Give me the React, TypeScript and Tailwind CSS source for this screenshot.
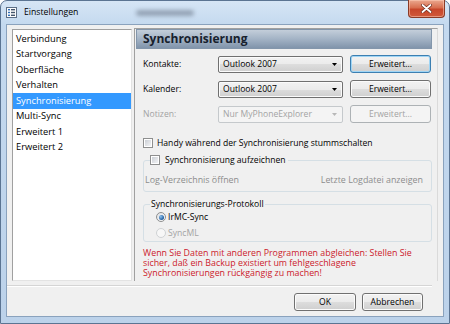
import React from "react";

const items = [
  "Verbindung",
  "Startvorgang",
  "Oberfläche",
  "Verhalten",
  "Synchronisierung",
  "Multi-Sync",
  "Erweitert 1",
  "Erweitert 2",
];

const btnBg =
  "bg-[linear-gradient(#f2f2f2,#ebebeb_50%,#dddddd_50%,#cfcfcf)] shadow-[inset_0_0_0_1px_#fbfbfb]";

function Button({
  label,
  variant = "normal",
  className = "",
}: {
  label: string;
  variant?: "normal" | "default" | "disabled";
  className?: string;
}) {
  let look = `border-[#707070] text-black ${btnBg}`;
  if (variant === "default")
    look =
      "border-[#3c7fb1] text-black bg-[linear-gradient(#f2f2f2,#ebebeb_50%,#dddddd_50%,#cfcfcf)] shadow-[inset_0_0_0_1px_#9fd5f5]";
  if (variant === "disabled") look = "border-[#adb2b5] text-[#a3a3a3] bg-[#f4f4f4]";
  return (
    <div
      className={`flex h-[18px] items-center justify-center rounded-[3px] border ${look} ${className}`}
    >
      {label}
    </div>
  );
}

function Combo({ value, disabled = false }: { value: string; disabled?: boolean }) {
  return (
    <div
      className={
        disabled
          ? "flex h-[17px] w-[125px] items-center justify-between rounded-[2px] border border-[#c5c9cc] bg-[#f4f4f4] pl-[4px] pr-[5px] text-[#a3a3a3]"
          : `flex h-[17px] w-[125px] items-center justify-between rounded-[2px] border border-[#707070] pl-[4px] pr-[5px] text-black ${btnBg}`
      }
    >
      <span>{value}</span>
      <svg width="5" height="3" viewBox="0 0 5 3">
        <path d="M0 0H5L2.5 3Z" fill={disabled ? "#b8b8b8" : "#000"} />
      </svg>
    </div>
  );
}

function Check() {
  return (
    <span className="flex h-[10px] w-[10px] shrink-0 items-center justify-center border border-[#8e8f8f] bg-white">
      <span className="h-[6px] w-[6px] bg-[linear-gradient(135deg,#cbcfd5,#f3f4f6)]" />
    </span>
  );
}

function Radio({ on = false, disabled = false }: { on?: boolean; disabled?: boolean }) {
  return (
    <span
      className={
        disabled
          ? "flex h-[10px] w-[10px] shrink-0 items-center justify-center rounded-full border border-[#cfd2d4] bg-[#f7f7f7]"
          : "flex h-[10px] w-[10px] shrink-0 items-center justify-center rounded-full border border-[#8e8f8f] bg-[linear-gradient(135deg,#dcdfe3,#ffffff)]"
      }
    >
      {on && (
        <span className="h-[5px] w-[5px] rounded-full bg-[radial-gradient(circle_at_35%_35%,#8fc3f0,#1f5b9c_70%,#153f6e)]" />
      )}
    </span>
  );
}

export default function App() {
  return (
    <div className="h-[324px] w-[450px] bg-white font-['Open_Sans',sans-serif]">
      <div className="flex h-[324px] w-[450px] flex-col rounded-t-[7px] border border-[#5b7492] bg-[linear-gradient(180deg,#d6e5f5_0px,#c4d9ef_24px,#bcd2ea_100%)]">
        {/* title bar */}
        <div className="flex h-[23px] shrink-0 items-center">
          <svg className="ml-[5px]" width="11" height="11" viewBox="0 0 11 11">
            <rect x="0.5" y="0.5" width="10" height="10" fill="#fdfdfd" stroke="#5d6f86" />
            <rect x="2" y="2" width="2" height="1.4" fill="#2f6fb8" />
            <rect x="5" y="2" width="4" height="1.4" fill="#44556b" />
            <rect x="2" y="4.8" width="2" height="1.4" fill="#2f6fb8" />
            <rect x="5" y="4.8" width="4" height="1.4" fill="#44556b" />
            <rect x="2" y="7.6" width="2" height="1.4" fill="#2f6fb8" />
            <rect x="5" y="7.6" width="4" height="1.4" fill="#44556b" />
          </svg>
          <span className="ml-[7px] text-[8.7px] text-black">Einstellungen</span>
          <span className="ml-[58px] h-[6px] w-[58px] rounded-full bg-[#7a889a] opacity-70 blur-[2px]" />
          <div className="mr-[4px] mt-[-1px] ml-auto flex h-[18px] w-[37px] items-center justify-center self-start rounded-b-[4px] border border-t-0 border-[#8a3a26] bg-[linear-gradient(#eba88f,#d86f50_45%,#c7462a_55%,#d0593a)] shadow-[inset_0_0_0_1px_rgba(255,210,190,0.5)]">
            <svg width="11" height="9" viewBox="0 0 11 9">
              <path d="M1.5 1L9.5 8M9.5 1L1.5 8" stroke="#6b2a1c" strokeWidth="3.2" strokeLinecap="round" />
              <path d="M1.5 1L9.5 8M9.5 1L1.5 8" stroke="#ffffff" strokeWidth="1.8" strokeLinecap="round" />
            </svg>
          </div>
        </div>

        {/* client area */}
        <div className="ml-[5px] flex h-[293px] w-[438px] flex-col border border-[#8aa2bd] bg-[#f0f0f0] text-[8.6px] text-black">
          <div className="flex">
            {/* list */}
            <div className="ml-[5px] mt-[4px] h-[252px] w-[120px] border border-t-[#a0a0a0] border-l-[#a0a0a0] border-r-[#e3e3e3] border-b-[#e3e3e3] bg-white pt-[1px] text-[9.3px]">
              {items.map((it) => (
                <div
                  key={it}
                  className={
                    it === "Synchronisierung"
                      ? "flex h-[15.5px] items-center bg-[#3399ff] pl-[3px] text-white"
                      : "flex h-[15.5px] items-center pl-[3px] text-black"
                  }
                >
                  {it}
                </div>
              ))}
            </div>

            {/* panel */}
            <div className="ml-[2px] mt-[3px] flex h-[253px] w-[304px] flex-col border-l border-t border-r border-l-[#a0a0a0] border-t-[#a0a0a0] border-r-[#dadada] pl-[1px] pr-[5px]">
              <div className="flex h-[20px] shrink-0 items-center border border-[#8396ab] bg-[linear-gradient(#c3ceda,#a3b3c5_50%,#8194ab)] pl-[6px] text-[12px] font-bold text-[#17212d]">
                Synchronisierung
              </div>

              <div className="flex flex-col pl-[7px]">
                <div className="mt-[6px] flex h-[18px] items-center">
                  <span className="w-[75px]">Kontakte:</span>
                  <Combo value="Outlook 2007" />
                  <Button label="Erweitert..." variant="default" className="ml-[7px] w-[81px]" />
                </div>
                <div className="mt-[7px] flex h-[18px] items-center">
                  <span className="w-[75px]">Kalender:</span>
                  <Combo value="Outlook 2007" />
                  <Button label="Erweitert..." className="ml-[7px] w-[81px]" />
                </div>
                <div className="mt-[7px] flex h-[18px] items-center">
                  <span className="w-[75px] text-[#a3a3a3]">Notizen:</span>
                  <Combo value="Nur MyPhoneExplorer" disabled />
                  <Button label="Erweitert..." variant="disabled" className="ml-[7px] w-[81px]" />
                </div>

                <div className="mt-[14px] flex h-[12px] items-center">
                  <Check />
                  <span className="ml-[4px]">Handy während der Synchronisierung stummschalten</span>
                </div>

                <fieldset className="mt-[5px] w-[289px] rounded-[3px] border border-[#d5dfe5]">
                  <legend className="ml-[6px] pr-[2px]">
                    <span className="flex h-[12px] items-center">
                      <Check />
                      <span className="ml-[5px]">Synchronisierung aufzeichnen</span>
                    </span>
                  </legend>
                  <div className="mb-[5px] mt-[8px] flex h-[12px] items-center justify-between pl-[1px] pr-[8px] text-[8.9px] text-[#8d8d8d]">
                    <span>Log-Verzeichnis öffnen</span>
                    <span>Letzte Logdatei anzeigen</span>
                  </div>
                </fieldset>

                <fieldset className="mt-[6px] w-[289px] rounded-[3px] border border-[#d5dfe5]">
                  <legend className="ml-[6px] px-[1px]">
                    <span className="flex h-[12px] items-center">Synchronisierungs-Protokoll</span>
                  </legend>
                  <div className="mt-[1px] flex h-[12px] items-center pl-[12px]">
                    <Radio on />
                    <span className="ml-[2px]">IrMC-Sync</span>
                  </div>
                  <div className="mb-[2px] mt-[4px] flex h-[12px] items-center pl-[12px] text-[#a3a3a3]">
                    <Radio disabled />
                    <span className="ml-[2px]">SyncML</span>
                  </div>
                </fieldset>

                <p className="mt-[6px] text-[8.85px] leading-[10px] text-[#cc1a2c]">
                  Wenn Sie Daten mit anderen Programmen abgleichen: Stellen Sie
                  <br />
                  sicher, daß ein Backup existiert um fehlgeschlagene
                  <br />
                  Synchronisierungen rückgängig zu machen!
                </p>
              </div>
            </div>
          </div>

          <div className="mt-[4px] h-[2px] w-[425px] border-b border-t border-b-white border-t-[#d5d5d5]" />

          <div className="mt-[6px] flex justify-end gap-[6px] pr-[20px]">
            <Button label="OK" className="w-[62px]" />
            <Button label="Abbrechen" className="w-[61px]" />
          </div>
        </div>
      </div>
    </div>
  );
}
